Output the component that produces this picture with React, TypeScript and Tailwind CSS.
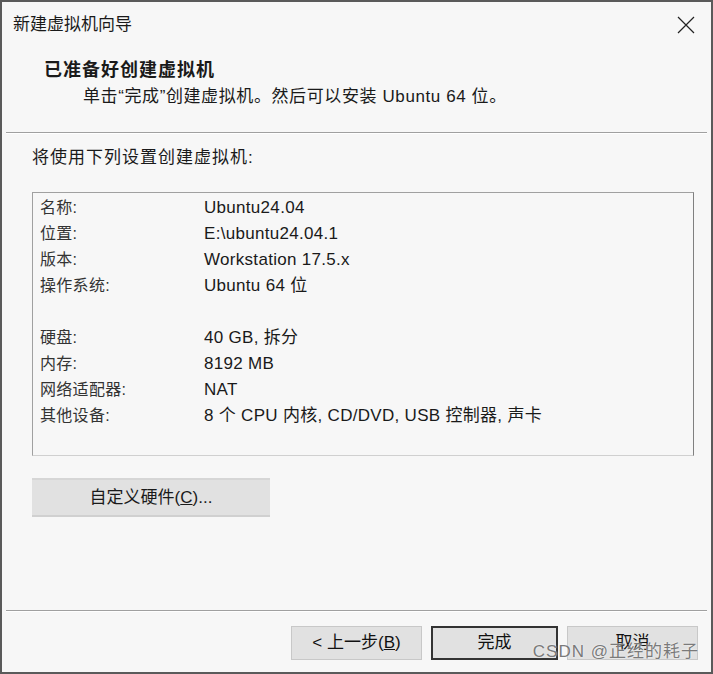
import React from "react";

const rows: [string, string][] = [
  ["名称:", "Ubuntu24.04"],
  ["位置:", "E:\\ubuntu24.04.1"],
  ["版本:", "Workstation 17.5.x"],
  ["操作系统:", "Ubuntu 64 位"],
  ["", ""],
  ["硬盘:", "40 GB, 拆分"],
  ["内存:", "8192 MB"],
  ["网络适配器:", "NAT"],
  ["其他设备:", "8 个 CPU 内核, CD/DVD, USB 控制器, 声卡"],
];

const font = {
  fontFamily: '"Liberation Sans", "Noto Sans CJK SC", sans-serif',
};

function Separator() {
  return (
    <div className="mx-[4px]">
      <div className="h-px bg-[#a0a0a0]" />
      <div className="h-px bg-white" />
    </div>
  );
}

function DialogButton({
  label,
  primary,
}: {
  label: React.ReactNode;
  primary?: boolean;
}) {
  return (
    <button
      className={`flex h-[34px] items-center justify-center bg-[#e1e1e1] text-[17px] text-[#111] ${
        primary ? "w-[127px] border-2 border-[#333]" : "w-[131px] border border-[#c8c8c8]"
      }`}
    >
      {label}
    </button>
  );
}

export default function App() {
  return (
    <div
      className="relative flex h-[674px] w-[713px] flex-col border-2 border-[#5a5a5a] bg-[#f7f7f7] text-[#1a1a1a]"
      style={font}
    >
      {/* title bar */}
      <div className="flex h-[46px] items-center justify-between pl-[11px] pr-[16px]">
        <span className="text-[17px]">新建虚拟机向导</span>
        <svg width="18" height="18" viewBox="0 0 18 18">
          <path d="M1 1 L17 17 M17 1 L1 17" stroke="#222" strokeWidth="1.2" />
        </svg>
      </div>

      {/* header */}
      <div className="flex h-[84px] flex-col pl-[42px] pt-[9px]">
        <div className="text-[18px] font-bold leading-[26px] tracking-[1px]">
          已准备好创建虚拟机
        </div>
        <div className="ml-[39px] mt-[1px] text-[17px] leading-[26px] tracking-[0.6px]">
          单击“完成”创建虚拟机。然后可以安装 Ubuntu 64 位。
        </div>
      </div>
      <Separator />

      {/* body */}
      <div className="flex flex-1 flex-col pl-[30px] pr-[17px] pt-[11px]">
        <div className="text-[17px] leading-[26px] tracking-[1px]">将使用下列设置创建虚拟机:</div>
        <div className="mt-[21px] h-[264px] border border-[#a0a0a0] border-b-[#d0d0d0] border-r-[#808080] bg-[#f7f7f7] pl-[7px] pt-[2px]">
          {rows.map(([k, v], i) => (
            <div key={i} className="flex h-[26px] items-center text-[17px] tracking-[0.3px]">
              <span className="w-[164px] text-[#333] text-[16px]">{k}</span>
              <span>{v}</span>
            </div>
          ))}
        </div>
        <button className="mt-[22px] flex h-[37px] w-[238px] items-center justify-center border-t-2 border-[#d6d6d6] bg-[#e1e1e1] text-[17px] shadow-[0_2px_0_#d0d0d0]">
          自定义硬件(<span className="underline">C</span>)...
        </button>
      </div>

      <Separator />
      {/* footer buttons */}
      <div className="flex h-[60px] items-center justify-end gap-[9px] pr-[13px] pt-[2px]">
        <DialogButton
          label={
            <>
              &lt; 上一步(<span className="underline">B</span>)
            </>
          }
        />
        <DialogButton primary label="完成" />
        <DialogButton label="取消" />
      </div>

      <div className="pointer-events-none absolute bottom-[8px] right-[12px] text-[17px] tracking-[1px] text-[#7a7a7a] [text-shadow:0_0_2px_#fff]">
        CSDN @正经的耗子
      </div>
    </div>
  );
}
